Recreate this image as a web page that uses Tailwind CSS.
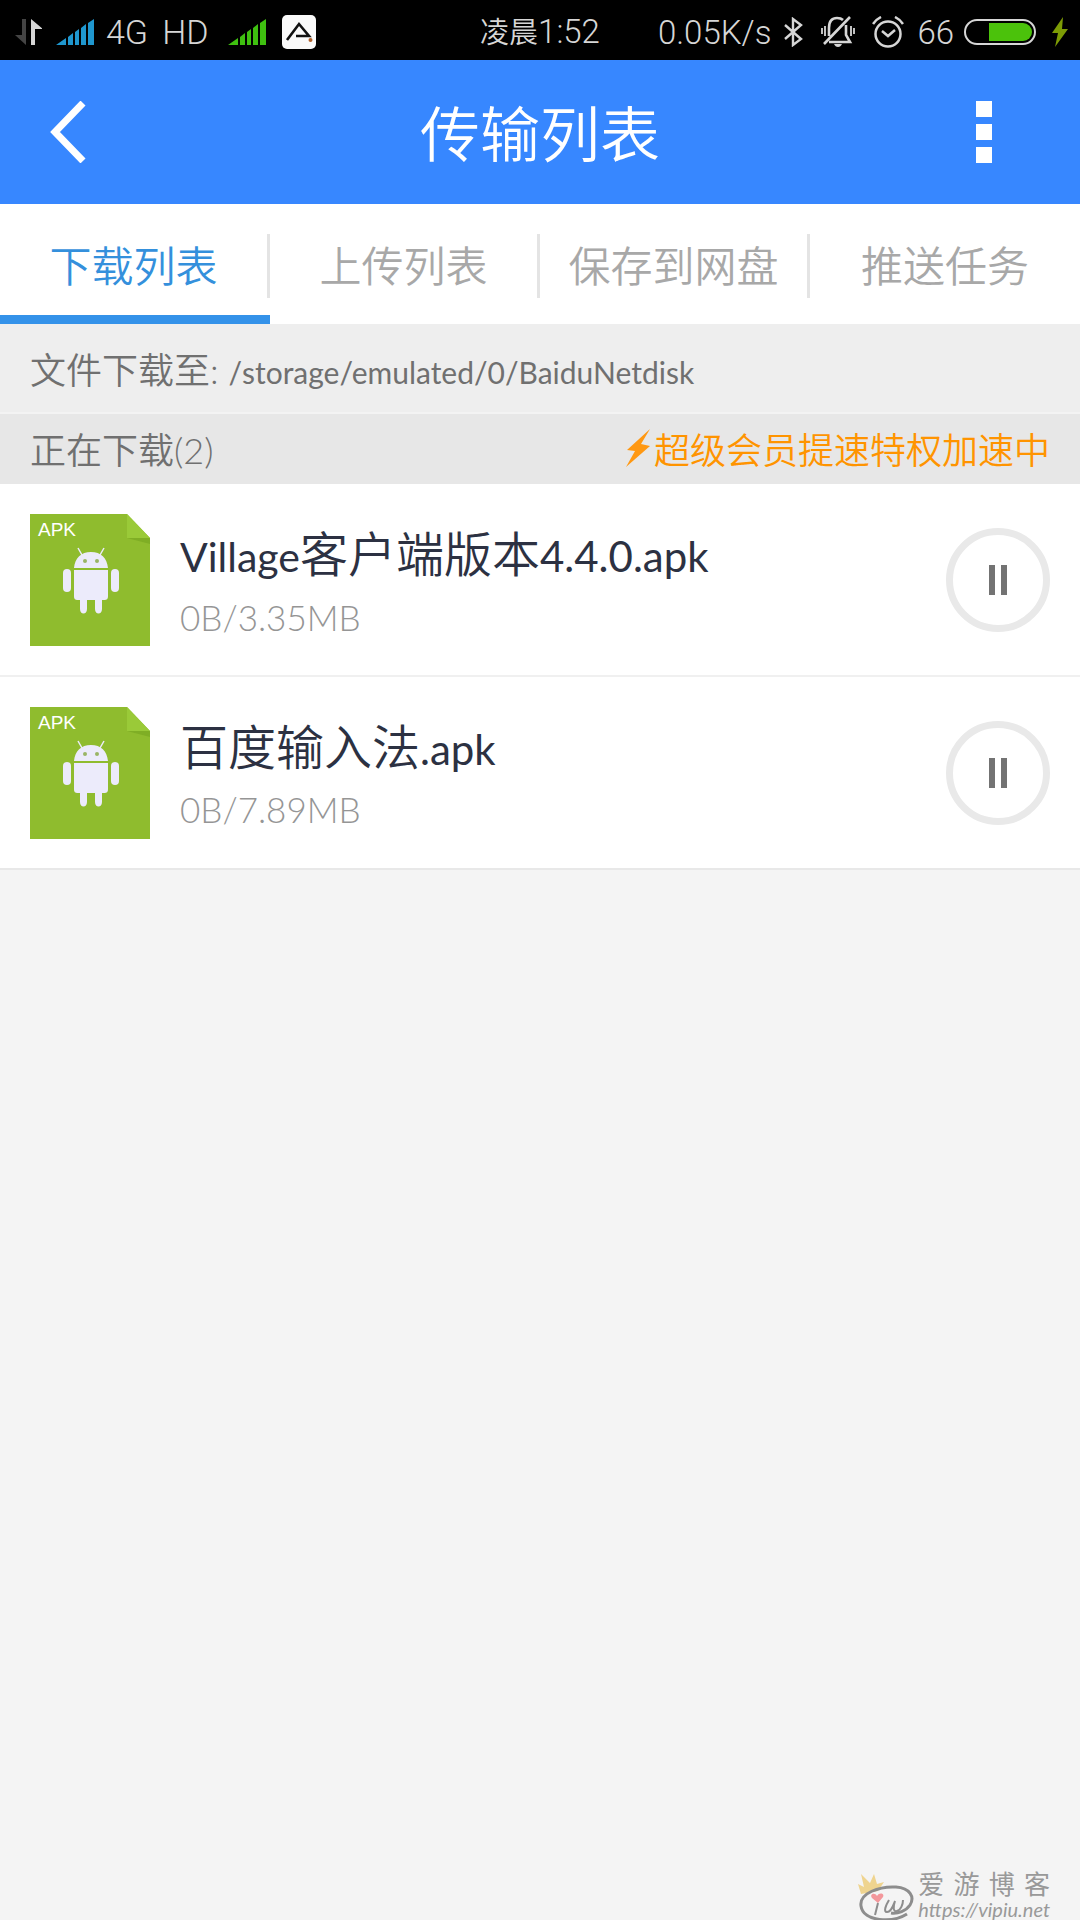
<!DOCTYPE html>
<html lang="zh-CN">
<head>
<meta charset="utf-8">
<meta name="viewport" content="width=device-width, initial-scale=1">
<title>传输列表</title>
<script src="https://cdn.jsdelivr.net/npm/@tailwindcss/browser@4"></script>
</head>
<body class="flex min-h-screen flex-col bg-[#f4f4f4] font-['Lato','Noto_Sans_CJK_SC',sans-serif] font-[350]">

<!-- system status bar -->
<div class="grid h-[60px] grid-cols-[1fr_auto_1fr] items-center bg-black px-3 font-['Roboto','Noto_Sans_CJK_SC',sans-serif] text-[33px] leading-[60px] text-[#d6d6d6]">
  <div class="flex items-center">
    <svg class="mr-[14px] ml-[2px] h-7 w-7" viewBox="0 0 28 28" aria-hidden="true">
      <path d="M12 1v26L1 17h7V1z" fill="#444"/>
      <path d="M17 27V1l12 10h-8v16z" fill="#d6d6d6"/>
    </svg>
    <svg class="mr-3 h-[26px] w-[38px]" viewBox="0 0 38 26" fill="#1f97cf" aria-hidden="true">
      <path d="M0 26l10-7v7zM12 18l5-4v12h-5zM19 13l4-3v16h-4zM25 9l5-4v21h-5zM32 4l6-4v26h-6z"/>
    </svg>
    <span class="mr-[14px] text-[34px]">4G</span>
    <span class="mr-5 text-[34px]">HD</span>
    <svg class="mr-4 h-[26px] w-[38px]" viewBox="0 0 38 26" fill="#3fc010" aria-hidden="true">
      <path d="M0 26l10-7v7zM12 18l5-4v12h-5zM19 13l4-3v16h-4zM25 9l5-4v21h-5zM32 4l6-4v26h-6z"/>
    </svg>
    <svg class="h-[34px] w-[34px]" viewBox="0 0 34 34" aria-hidden="true">
      <rect width="34" height="34" rx="5" fill="#fafafa"/>
      <path d="M5 25L17 9l10 12H14" fill="none" stroke="#111" stroke-width="2.6"/>
      <circle cx="28.500" cy="25" r="2" fill="#b0602a"/>
    </svg>
  </div>
  <div class="pt-[2px]"><span class="text-[29px]">凌晨</span>1:52</div>
  <div class="flex items-center justify-end">
    <span class="mr-[13px] pt-[2px]">0.05K/s</span>
    <svg class="mr-4 h-[30px] w-5" viewBox="0 0 20 30" fill="none" stroke="#d6d6d6" stroke-width="2.400" aria-hidden="true">
      <path d="M1 8l16 14-8 6V2l8 6L1 22"/>
    </svg>
    <svg class="mr-4 h-8 w-[36px]" viewBox="0 0 36 32" fill="none" stroke="#d6d6d6" stroke-width="2.600" aria-hidden="true">
      <path d="M9 20v-8c0-7 3-10 8-10 3 0 5 1 6 2M26 9v10l4 7H9M30 1L4 28"/>
      <path d="M5 10v10M2 12v6M31 10v10M34 12v6" stroke-width="1.800"/>
      <path d="M14 28h8c-1 2-2 3-4 3s-3-1-4-3z" fill="#d6d6d6" stroke="none"/>
    </svg>
    <svg class="mr-[13px] h-8 w-8" viewBox="0 0 32 32" fill="none" stroke="#d6d6d6" stroke-width="2.500" aria-hidden="true">
      <circle cx="16" cy="18" r="12.500"/>
      <path d="M10 15l6 5 7-6M1 8c2-3 4-5 8-7M31 8c-2-3-4-5-8-7"/>
    </svg>
    <span class="mr-[10px] pt-[2px]">66</span>
    <svg class="mr-4 h-[26px] w-[72px]" viewBox="0 0 72 26" aria-hidden="true">
      <rect x="1" y="1" width="70" height="24" rx="12" fill="none" stroke="#d6d6d6" stroke-width="2"/>
      <path d="M25 4h34a9 9 0 0 1 0 18H25z" fill="#4bc20b"/>
    </svg>
    <svg class="h-[30px] w-4" viewBox="0 0 16 30" fill="#7d9c05" aria-hidden="true">
      <path d="M11 0L0 16h6L3 30l13-18h-6z"/>
    </svg>
  </div>
</div>

<header class="grid h-36 grid-cols-[1fr_auto_1fr] items-center bg-[#3787ff] text-white">
  <button type="button" aria-label="返回" class="ml-12 w-10">
    <svg class="h-[62px] w-10" viewBox="0 0 40 62" fill="none" stroke="#fff" stroke-width="7" aria-hidden="true">
      <path d="M35 2L7 31l28 29"/>
    </svg>
  </button>
  <h1 class="pt-1 text-[60px] leading-[80px]">传输列表</h1>
  <button type="button" aria-label="更多" class="mr-[88px] flex flex-col gap-[7px] justify-self-end">
    <span class="size-4 bg-white"></span>
    <span class="size-4 bg-white"></span>
    <span class="size-4 bg-white"></span>
  </button>
</header>

<nav class="grid h-[120px] grid-cols-4 bg-white text-[42px] text-[#a8a8a8]">
  <a href="#" aria-current="page" class="flex flex-col border-b-[9px] border-[#3492e9] pt-[30px] text-[#3490dc]"><span class="border-r-[3px] border-[#e4e4e4] text-center leading-[64px]">下载列表</span></a>
  <a href="#" class="flex flex-col pt-[30px]"><span class="border-r-[3px] border-[#e4e4e4] text-center leading-[64px]">上传列表</span></a>
  <a href="#" class="flex flex-col pt-[30px]"><span class="border-r-[3px] border-[#e4e4e4] text-center leading-[64px]">保存到网盘</span></a>
  <a href="#" class="flex flex-col pt-[30px]"><span class="text-center leading-[64px]">推送任务</span></a>
</nav>

<main>
  <p class="h-[90px] border-b-2 border-[#f3f3f3] bg-[#eee] px-[30px] text-[36px] leading-[92px] text-[#707070]">文件下载至: <span class="text-[30px] font-normal">/storage/emulated/0/BaiduNetdisk</span></p>

  <div class="flex h-[70px] items-center justify-between bg-[#e7e7e7] px-[30px] text-[36px] leading-[70px]">
    <h2 class="pt-[2px] text-[#707070]">正在下载(2)</h2>
    <p class="flex items-center pt-[2px] text-[#ff9400]">
      <svg class="mr-1 mb-1 h-[38px] w-6" viewBox="0 0 24 38" fill="#ff9812" aria-hidden="true"><path d="M24 0L1 21l8 1L0 38l24-21-9-2z"/></svg>
      超级会员提速特权加速中
    </p>
  </div>

  <ul class="bg-white">
    <li class="flex h-[193px] items-center gap-[30px] border-b-2 border-[#f0f0f0] px-[30px]">
      <svg class="h-[132px] w-[120px] shrink-0" viewBox="0 0 120 132" role="img" aria-label="APK">
        <path d="M0 0h97l23 24v108H0z" fill="#8fbc2e"/>
        <path d="M97 24h23v6z" fill="#7fae25"/>
        <path d="M97 0l23 24H97z" fill="#9aca38"/>
        <text x="8" y="22" font-size="19" fill="#fff" font-family="Liberation Sans">APK</text>
        <g fill="#ecebfb">
          <path d="M44 54c1-10 7-16 17-16s16 6 17 16zM44 56h34v26c0 3-1 4-4 4h-2v9c0 6-7 6-7 0v-9h-8v9c0 6-7 6-7 0v-9h-2c-3 0-4-1-4-4z"/>
          <rect x="33" y="55" width="8" height="23" rx="4"/>
          <rect x="81" y="55" width="8" height="23" rx="4"/>
          <path d="M52 41l-4-7M70 41l4-7" stroke="#ecebfb" stroke-width="1.500"/>
        </g>
        <circle cx="55" cy="47" r="2" fill="#9ab565"/><circle cx="67" cy="47" r="2" fill="#9ab565"/>
      </svg>
      <div class="min-w-0 flex-1 pt-[3px]">
        <h3 class="text-[48px] leading-[68px] text-[#2c3142]"><span class="text-[41px] font-normal">Village</span>客户端版本<span class="text-[42px] font-normal">4.4.0.apk</span></h3>
        <p class="text-[35px] leading-[52px] text-[#959595]">0B/3.35MB</p>
      </div>
      <button type="button" aria-label="暂停" class="flex size-[104px] shrink-0 items-center justify-center gap-[6px] rounded-full border-[7px] border-[#e9e9e9]">
        <span class="h-[30px] w-[6px] bg-[#737373]"></span><span class="h-[30px] w-[6px] bg-[#737373]"></span>
      </button>
    </li>
    <li class="flex h-[193px] items-center gap-[30px] border-b-2 border-[#e8e8e8] px-[30px]">
      <svg class="h-[132px] w-[120px] shrink-0" viewBox="0 0 120 132" role="img" aria-label="APK">
        <path d="M0 0h97l23 24v108H0z" fill="#8fbc2e"/>
        <path d="M97 24h23v6z" fill="#7fae25"/>
        <path d="M97 0l23 24H97z" fill="#9aca38"/>
        <text x="8" y="22" font-size="19" fill="#fff" font-family="Liberation Sans">APK</text>
        <g fill="#ecebfb">
          <path d="M44 54c1-10 7-16 17-16s16 6 17 16zM44 56h34v26c0 3-1 4-4 4h-2v9c0 6-7 6-7 0v-9h-8v9c0 6-7 6-7 0v-9h-2c-3 0-4-1-4-4z"/>
          <rect x="33" y="55" width="8" height="23" rx="4"/>
          <rect x="81" y="55" width="8" height="23" rx="4"/>
          <path d="M52 41l-4-7M70 41l4-7" stroke="#ecebfb" stroke-width="1.500"/>
        </g>
        <circle cx="55" cy="47" r="2" fill="#9ab565"/><circle cx="67" cy="47" r="2" fill="#9ab565"/>
      </svg>
      <div class="min-w-0 flex-1 pt-[3px]">
        <h3 class="text-[48px] leading-[68px] text-[#2c3142]">百度输入法<span class="text-[42px] font-normal">.apk</span></h3>
        <p class="text-[35px] leading-[52px] text-[#959595]">0B/7.89MB</p>
      </div>
      <button type="button" aria-label="暂停" class="flex size-[104px] shrink-0 items-center justify-center gap-[6px] rounded-full border-[7px] border-[#e9e9e9]">
        <span class="h-[30px] w-[6px] bg-[#737373]"></span><span class="h-[30px] w-[6px] bg-[#737373]"></span>
      </button>
    </li>
  </ul>
</main>

<!-- site mark -->
<footer class="mt-auto flex items-end justify-end gap-1 pr-[30px] text-[#999]">
  <svg class="h-12 w-14" viewBox="0 0 56 48" fill="none" aria-hidden="true">
    <path d="M3 22L0 12l6 3-3-13 9 9 4-9 3 10 7-2-6 9z" fill="#efd48f"/>
    <path d="M49 42C35 51 5 50 3 34 1 21 22 14 38 15c14 1 19 10 14 18-4 6-12 9-19 8" stroke="#8d8d8d" stroke-width="3"/>
    <path d="M20 31l-6-5c-3-4 3-6 5-2 2-4 8-3 6 1z" fill="#f3979b"/>
    <path d="M20 31l-3 12M31 28c-3 5-6 12-2 12s6-6 8-11c-2 6-2 11 2 10s6-7 6-11" stroke="#8d8d8d" stroke-width="2"/>
  </svg>
  <div>
    <p class="flex justify-between text-[26px] leading-7 font-normal"><span>爱</span><span>游</span><span>博</span><span>客</span></p>
    <a href="https://vipiu.net" class="block text-[20px] leading-[22px] font-normal italic">https://vipiu.net</a>
  </div>
</footer>
</body>
</html>
